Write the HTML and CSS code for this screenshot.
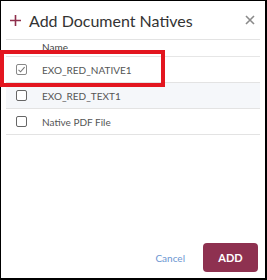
FILE: index.html
```html
<!DOCTYPE html>
<html lang="en">
<head>
  <meta charset="UTF-8">
  <meta name="viewport" content="width=device-width, initial-scale=1.0">
  <title>Add Document Natives</title>
  <link rel="stylesheet" href="styles.css">
</head>
<body>

  <div class="dialog">
    <!-- Header -->
    <div class="dialog-header">
      <span class="plus">
        <svg width="11" height="11" viewBox="0 0 11 11"><path d="M5.5 0V11M0 5.5H11" stroke="#8e2f4c" stroke-width="1.6"/></svg>
      </span>
      <span class="title">Add Document Natives</span>
      <span class="close">
        <svg width="10" height="10" viewBox="0 0 10 10"><path d="M1 1L9 9M9 1L1 9" stroke="#8a8a8a" stroke-width="1.6"/></svg>
      </span>
    </div>

    <!-- Natives list -->
    <div class="list">
      <div class="list-head">Name</div>
      <div class="row">
        <span class="box checked">
          <svg width="9" height="9" viewBox="0 0 9 9"><path d="M1.5 4.8L3.6 6.8L7.6 2.2" fill="none" stroke="#777" stroke-width="1.1"/></svg>
        </span>
        <span class="label">EXO_RED_NATIVE1</span>
      </div>
      <div class="row alt">
        <span class="box"></span>
        <span class="label">EXO_RED_TEXT1</span>
      </div>
      <div class="row">
        <span class="box"></span>
        <span class="label">Native PDF File</span>
      </div>
    </div>

    <!-- Footer -->
    <div class="dialog-footer">
      <a href="javascript:void(0)" class="cancel">Cancel</a>
      <button type="button" class="add-btn">ADD</button>
    </div>

    <div class="highlight"></div>
  </div>

</body>
</html>
```

FILE: styles.css
```css
/* General Styles */
body {
  margin: 0;
  padding: 0;
  font-family: 'Lato', 'Liberation Sans', sans-serif;
  background: #fff;
}

.dialog {
  position: relative;
  width: 267px;
  height: 280px;
  box-sizing: border-box;
  border-style: solid;
  border-color: #000;
  border-width: 1px 2px 2px 1px;
  display: flex;
  flex-direction: column;
  background: #fff;
}

/* Header */
.dialog-header {
  display: flex;
  align-items: center;
  height: 38px;
  margin: 0 5px;
  padding: 0 4px;
  border-bottom: 1px solid #e3e3e3;
}

.plus {
  display: flex;
  margin-right: 8px;
}

.title {
  flex: 1;
  font-size: 16px;
  color: #333;
}

.close {
  display: flex;
  margin-right: 1px;
}

/* List */
.list {
  margin: 0 5px;
}

.list-head {
  height: 16px;
  line-height: 14px;
  padding-left: 36px;
  font-size: 10px;
  color: #444;
  border-bottom: 1px solid #e6e6e6;
}

.row {
  display: flex;
  align-items: center;
  height: 25px;
  padding-left: 10px;
  border-bottom: 1px solid #e3e3e3;
}

.row.alt {
  background: #f5f7fa;
}

.box {
  width: 9px;
  height: 9px;
  border: 1px solid #666;
  border-radius: 2px;
  margin-right: 15px;
  display: flex;
  align-items: center;
  justify-content: center;
  background: #fff;
}

.box.checked {
  border-color: #888;
}

.label {
  font-size: 10px;
  color: #555;
}

/* Footer */
.dialog-footer {
  margin-top: auto;
  display: flex;
  align-items: center;
  justify-content: flex-end;
  gap: 18px;
  padding: 0 7px 6px 0;
}

.cancel {
  font-size: 10px;
  color: #6b96d1;
  text-decoration: none;
}

.add-btn {
  width: 55px;
  height: 29px;
  border: none;
  border-radius: 4px;
  background: #8e3150;
  color: #fff;
  font-family: 'Lato', 'Liberation Sans', sans-serif;
  font-size: 11px;
  font-weight: bold;
  cursor: pointer;
}

/* Red annotation box */
.highlight {
  position: absolute;
  left: -1px;
  top: 49px;
  width: 157px;
  height: 29px;
  border: 4px solid #e3161f;
}
```
